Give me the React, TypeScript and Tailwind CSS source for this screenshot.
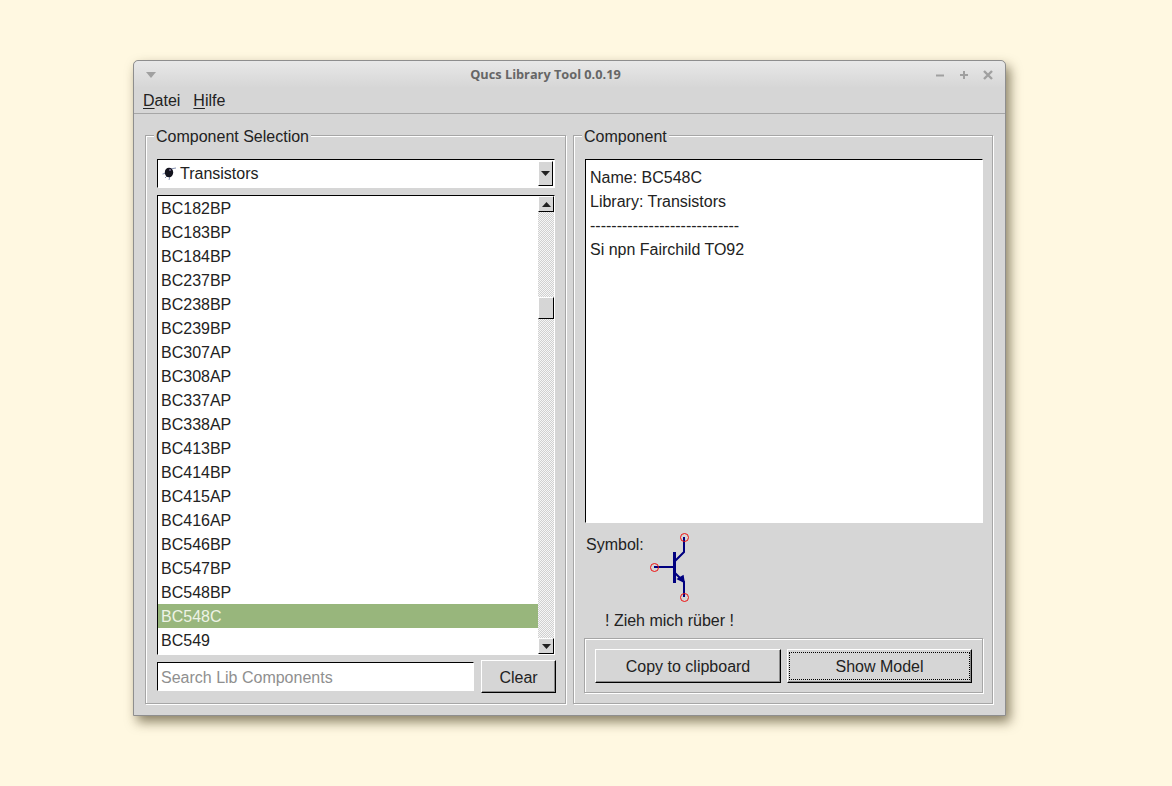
const models = [
  'BC182BP', 'BC183BP', 'BC184BP', 'BC237BP', 'BC238BP', 'BC239BP', 'BC307AP', 'BC308AP', 'BC337AP',
  'BC338AP', 'BC413BP', 'BC414BP', 'BC415AP', 'BC416AP', 'BC546BP', 'BC547BP', 'BC548BP', 'BC548C', 'BC549',
]

const sunken = 'border-[1.5px] border-t-black border-l-black border-r-white border-b-white'
const raised = 'border border-t-white border-l-white border-r-black border-b-black shadow-[inset_-1px_-1px_0_#8c8c8c]'
const etched = 'border border-[#a6a6a6] shadow-[1px_1px_0_#ffffff,inset_1px_1px_0_#ffffff]'

function Arrow({ up }: { up?: boolean }) {
  return (
    <svg width="9" height="5" viewBox="0 0 9 5">
      <path d={up ? 'M4.5 0 9 5H0z' : 'M0 0h9L4.5 5z'} fill="#222222" />
    </svg>
  )
}

function ArrowButton({ up, className }: { up?: boolean; className: string }) {
  return (
    <div className={`flex items-center justify-center border border-t-white border-l-white border-r-black border-b-black bg-[#d6d6d6] ${className}`}>
      <Arrow up={up} />
    </div>
  )
}

function GroupBox({ title, className, children }: { title: string; className: string; children: React.ReactNode }) {
  return (
    <div className={`flex flex-col ${etched} ${className}`}>
      <div className="-mt-[8px] -ml-[3px] self-start bg-[#d6d6d6] px-[2px] text-[16px] leading-[18px]">{title}</div>
      {children}
    </div>
  )
}

function BugIcon() {
  return (
    <svg width="15" height="15" viewBox="0 0 15 15">
      <path d="M0.5 8 5 7M8 3l6-1M3 12l3-3M8 10l-1 4" stroke="#8490b0" strokeWidth="1" fill="none" />
      <ellipse cx="7" cy="6.5" rx="4.2" ry="4.8" fill="#14141e" />
      <circle cx="8" cy="4" r="1" fill="#7d6f9a" />
    </svg>
  )
}

function TransistorSymbol() {
  return (
    <svg width="44" height="74" viewBox="0 0 44 74">
      <g stroke="#000080" fill="none">
        <path d="M26.5 22v31" strokeWidth="3" />
        <path d="M6 37h20M27 31l9-9V7M27 43l9 9v15" strokeWidth="2" />
        <path d="M30 49l6 3-1-6z" strokeWidth="1.5" fill="#000080" />
      </g>
      <g stroke="#ee1111" fill="none" strokeWidth="1">
        <circle cx="36.5" cy="7.5" r="4" />
        <circle cx="6.5" cy="37.5" r="4" />
        <circle cx="36.5" cy="67.5" r="4" />
      </g>
    </svg>
  )
}

export default function App() {
  return (
    <div className="h-[786px] w-[1172px] overflow-hidden bg-[#fff8e1] bg-[radial-gradient(circle_at_center,#000000_0_0.5px,transparent_0.5px)] bg-[length:21.33px_21.33px] bg-[position:7.83px_-3.17px] pl-[133px] pt-[60px] font-['Liberation_Sans',Arial,sans-serif] text-[16px] text-[#222222]">
      <div className="flex h-[656px] w-[873px] flex-col rounded-t-[5px] border border-[#8e8e8e] bg-[#d6d6d6] shadow-[4px_6px_12px_rgba(60,50,20,0.6)]">
        {/* Title bar */}
        <div className="flex h-[27px] items-center rounded-t-[5px] bg-gradient-to-b from-[#e8e8e8] to-[#d6d6d6] pl-[12px] pr-[12px]">
          <svg width="10" height="6" viewBox="0 0 10 6">
            <path d="M0 0h10L5 6z" fill="#a0a0a0" />
          </svg>
          <div className="flex-1 text-center font-['Open_Sans',sans-serif] text-[12.75px] font-bold text-[#666666]">Qucs Library Tool 0.0.19</div>
          <div className="flex items-center gap-[14px]">
            <svg width="10" height="10" viewBox="0 0 10 10">
              <path d="M1 5.5h8" stroke="#a0a0a0" strokeWidth="2" />
            </svg>
            <svg width="10" height="10" viewBox="0 0 10 10">
              <path d="M1 5h8M5 1v8" stroke="#a0a0a0" strokeWidth="2" />
            </svg>
            <svg width="10" height="10" viewBox="0 0 10 10">
              <path d="M1 1l8 8M9 1l-8 8" stroke="#a0a0a0" strokeWidth="2.4" />
            </svg>
          </div>
        </div>

        {/* Menu */}
        <div className="flex h-[26px] items-center gap-[13px] border-b border-[#a6a6a6] pl-[9px]">
          <span><span className="underline underline-offset-2">D</span>atei</span>
          <span><span className="underline underline-offset-2">H</span>ilfe</span>
        </div>

        <div className="flex flex-1 items-start pl-[11px] pt-[21px]">
          <GroupBox title="Component Selection" className="h-[569px] w-[421px] pl-[11px]">
            {/* Library combo */}
            <div className={`mt-[13px] flex h-[29px] w-[398px] items-center bg-white pl-[4px] pr-[1px] ${sunken}`}>
              <BugIcon />
              <span className="ml-[3px] flex-1 pt-[1px]">Transistors</span>
              <ArrowButton className="h-[25px] w-[15px]" />
            </div>

            {/* Component list */}
            <div className={`mt-[7px] flex h-[460px] w-[398px] bg-white ${sunken}`}>
              <div className="h-full flex-1 overflow-hidden">
                {models.map((name) => (
                  <div
                    key={name}
                    className={`h-[24px] pl-[3px] leading-[26px] ${name === 'BC548C' ? 'bg-[#98b67c] text-[#eef3e6]' : ''}`}
                  >
                    {name}
                  </div>
                ))}
              </div>
              <div className="flex h-full w-[16px] flex-col bg-[repeating-conic-gradient(#d0d0d0_0_25%,#f6f6f6_0_50%)] bg-[length:2px_2px]">
                <ArrowButton up className="h-[16px] w-[16px]" />
                <div className="mt-[85px] h-[22px] w-[16px] border border-t-white border-l-white border-r-black border-b-black bg-[#d6d6d6]" />
                <div className="flex-1" />
                <ArrowButton className="h-[16px] w-[16px]" />
              </div>
            </div>

            {/* Search */}
            <div className="mt-[5px] flex items-center">
              <div className={`flex h-[29px] w-[317px] items-center bg-white pl-[3px] pt-[2px] text-[#8f8f8f] ${sunken}`}>Search Lib Components</div>
              <button className={`ml-[7px] h-[33px] w-[75px] bg-[#d6d6d6] pt-[2px] ${raised}`}>Clear</button>
            </div>
          </GroupBox>

          {/* Splitter */}
          <div className="h-[569px] w-[7px]" />

          <GroupBox title="Component" className="h-[569px] w-[420px] pl-[11px]">
            <div className={`mt-[13px] h-[364px] w-[398px] bg-white px-[4px] pt-[6px] leading-[24px] ${sunken}`}>
              <div>Name: BC548C</div>
              <div>Library: Transistors</div>
              <div>----------------------------</div>
              <div>Si npn Fairchild TO92</div>
            </div>

            {/* Drag symbol */}
            <div className="flex h-[90px] pl-[1px]">
              <span className="mt-[10px]">Symbol:</span>
              <div className="ml-[4px] mt-[7px]">
                <TransistorSymbol />
              </div>
            </div>
            <div className="-mt-[1px] pl-[20px] leading-[18px]">! Zieh mich rüber !</div>

            <div className={`-ml-[1px] mt-[8px] flex h-[55px] w-[399px] items-center gap-[6px] pl-[10px] ${etched}`}>
              <button className={`h-[34px] w-[186px] bg-[#d6d6d6] pt-[2px] ${raised}`}>Copy to clipboard</button>
              <button className={`h-[34px] w-[185px] bg-[#d6d6d6] ${raised}`}>
                <div className="mx-[1px] flex h-[28px] items-center justify-center border border-dotted border-black pt-[2px]">Show Model</div>
              </button>
            </div>
          </GroupBox>
        </div>
      </div>
    </div>
  )
}
